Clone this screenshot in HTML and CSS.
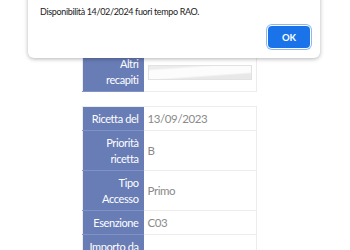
FILE: index.html
```html
<!DOCTYPE html>
<html lang="it">
<head>
	<meta charset="UTF-8">
	<title>Prenotazione</title>
	<link rel="stylesheet" href="styles.css">
</head>
<body>
	<div class="page">
		<table class="info-table">
			<tr>
				<th>Telefono</th>
				<td></td>
			</tr>
			<tr>
				<th>Altri<br>recapiti</th>
				<td><div class="redacted"></div></td>
			</tr>
		</table>
		<table class="info-table">
			<tr>
				<th>Ricetta del</th>
				<td>13/09/2023</td>
			</tr>
			<tr>
				<th>Priorità<br>ricetta</th>
				<td>B</td>
			</tr>
			<tr>
				<th>Tipo<br>Accesso</th>
				<td>Primo</td>
			</tr>
			<tr>
				<th>Esenzione</th>
				<td>C03</td>
			</tr>
			<tr>
				<th>Importo da<br>pagare</th>
				<td></td>
			</tr>
		</table>
	</div>
	<div class="alert-box">
		<p class="alert-msg">Disponibilità 14/02/2024 fuori tempo RAO.</p>
		<div class="alert-actions">
			<button class="btn-ok">OK</button>
		</div>
	</div>
</body>
</html>
```

FILE: styles.css
```css
/* reset */
* {
	margin: 0;
	padding: 0;
	box-sizing: border-box;
}
body {
	font-family: Lato, Arial, sans-serif;
	background: #fff;
	width: 350px;
	height: 250px;
	overflow: hidden;
	position: relative;
}
.page {
	padding: 27px 0 0 82px;
}
.info-table {
	width: 175px;
	table-layout: fixed;
	border-collapse: collapse;
	border: 1px solid #ececec;
	margin-bottom: 14px;
	line-height: 16px;
}
.info-table th {
	width: 61px;
	background: #687cb6;
	color: #fff;
	font-size: 11px;
	letter-spacing: -0.4px;
	font-weight: normal;
	text-align: right;
	white-space: nowrap;
	padding: 4px 5px 3px 0;
	border-bottom: 1px solid #8192c4;
}
.info-table td {
	color: #8a8a8a;
	font-size: 11.5px;
	letter-spacing: -0.4px;
	padding: 4px 4px 3px 4px;
	border-bottom: 1px solid #ececec;
	vertical-align: middle;
}
.redacted {
	width: 104px;
	height: 15px;
	border: 1px solid #e2e2e2;
	background: linear-gradient(176deg, #ececec 0 15%, #fcfcfc 25% 65%, #e8e8e8 75%);
}
.alert-box {
	position: absolute;
	left: 28px;
	top: -20px;
	width: 292px;
	padding: 24px 10px 10px 12px;
	background: #fff;
	border-radius: 6px;
	box-shadow: 0 1px 4px rgba(0, 0, 0, 0.3);
}
.alert-msg {
	font-size: 9px;
	line-height: 16px;
	letter-spacing: -0.35px;
	color: #222;
}
.alert-actions {
	display: flex;
	justify-content: flex-end;
	margin-top: 6px;
}
.btn-ok {
	width: 42px;
	height: 22px;
	background: #1a73e8;
	color: #fff;
	border: none;
	border-radius: 4px;
	font-family: Lato, Arial, sans-serif;
	font-size: 9.5px;
	font-weight: bold;
	box-shadow: 0 0 0 1px #fff, 0 0 0 2px #8db8f2;
}
```
